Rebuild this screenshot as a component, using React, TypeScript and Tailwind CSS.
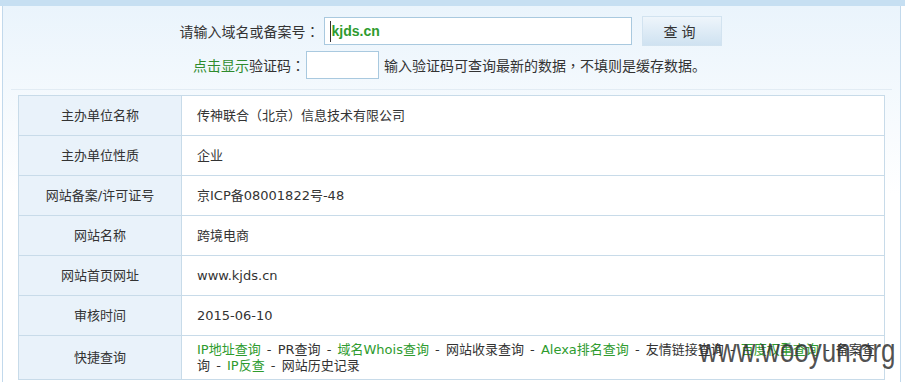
import React from 'react';

const rows: { label: string; value: string }[] = [
  { label: '主办单位名称', value: '传神联合（北京）信息技术有限公司' },
  { label: '主办单位性质', value: '企业' },
  { label: '网站备案/许可证号', value: '京ICP备08001822号-48' },
  { label: '网站名称', value: '跨境电商' },
  { label: '网站首页网址', value: 'www.kjds.cn' },
  { label: '审核时间', value: '2015-06-10' },
];

const links: { text: string; green: boolean }[] = [
  { text: 'IP地址查询', green: true },
  { text: 'PR查询', green: false },
  { text: '域名Whois查询', green: true },
  { text: '网站收录查询', green: false },
  { text: 'Alexa排名查询', green: true },
  { text: '友情链接查询', green: false },
  { text: '百度权重查询', green: true },
  { text: '备案查询', green: false },
  { text: 'IP反查', green: true },
  { text: '网站历史记录', green: false },
];

const font = "font-['DejaVu_Sans','Noto_Sans_CJK_SC',sans-serif]";

export default function App() {
  return (
    <div className={`relative w-[905px] h-[382px] overflow-hidden bg-white text-[13px] text-[#333] ${font}`}>
      <div className="h-[6px] bg-[#c6dff2]" />
      <div className="ml-[2px] mr-[4px] h-[376px] border-l border-r border-[#c2d9ec] bg-gradient-to-b from-[#eaf4fc] via-white to-white">
        {/* search form */}
        <div className="mx-[8px] border-b border-[#e2ecf4] pb-[10px] text-[14px] font-['Noto_Sans_CJK_SC',sans-serif]">
          <div className="flex items-center justify-center pt-[10px] pr-[2px]">
            <span>请输入域名或备案号<span className="font-['Noto_Sans_CJK_TC',sans-serif]">：</span></span>
            <div className="ml-[4px] flex h-[28px] w-[308px] items-center border border-[#a9c9df] bg-white pl-[5px]">
              <span className="border-l border-[#333] pl-[1px] font-['Liberation_Sans',sans-serif] text-[14px] font-bold text-[#2e9b2e]">kjds.cn</span>
            </div>
            <button className="ml-[10px] h-[30px] w-[80px] border border-[#d2e3f0] bg-gradient-to-b from-[#eef5fb] to-[#cfe2f1] text-[14px] tracking-[4px] text-[#333]">
              查询
            </button>
          </div>
          <div className="mt-[5px] flex items-center justify-center pr-[4px]">
            <span className="text-[#2e8b2e]">点击显示</span>
            <span>验证码<span className="font-['Noto_Sans_CJK_TC',sans-serif]">：</span></span>
            <div className="ml-[1px] h-[28px] w-[73px] border border-[#a9c9df] bg-white" />
            <span className="ml-[5px]">输入验证码可查询最新的数据<span className="font-['Noto_Sans_CJK_TC',sans-serif]">，</span>不填则是缓存数据。</span>
          </div>
        </div>

        {/* info table */}
        <table className="ml-[15px] mt-[5px] w-[867px] border-collapse">
          <tbody>
            {rows.map((r) => (
              <tr key={r.label} className="h-[40px]">
                <td className="w-[163px] border border-[#c8dbe9] bg-[#e9f2fa] text-center">{r.label}</td>
                <td className="border border-[#c8dbe9] bg-white pl-[15px]">{r.value}</td>
              </tr>
            ))}
            <tr className="h-[44px]">
              <td className="w-[163px] border border-[#c8dbe9] bg-[#e9f2fa] text-center">快捷查询</td>
              <td className="border border-[#c8dbe9] bg-white pl-[15px] pr-[6px] leading-[16px] break-all">
                {links.map((l, i) => (
                  <React.Fragment key={l.text}>
                    <span className={l.green ? 'text-[#2e9b2e]' : ''}>{l.text}</span>
                    {i < links.length - 1 && <span className="mx-[2px]"> - </span>}
                  </React.Fragment>
                ))}
              </td>
            </tr>
          </tbody>
        </table>
      </div>

      {/* watermark */}
      <div className="pointer-events-none absolute left-[699px] top-[333px] origin-top-left scale-y-[1.3] font-['Liberation_Sans',sans-serif] text-[26px] leading-none text-[#333]/85">
        www.wooyun.org
      </div>
    </div>
  );
}
